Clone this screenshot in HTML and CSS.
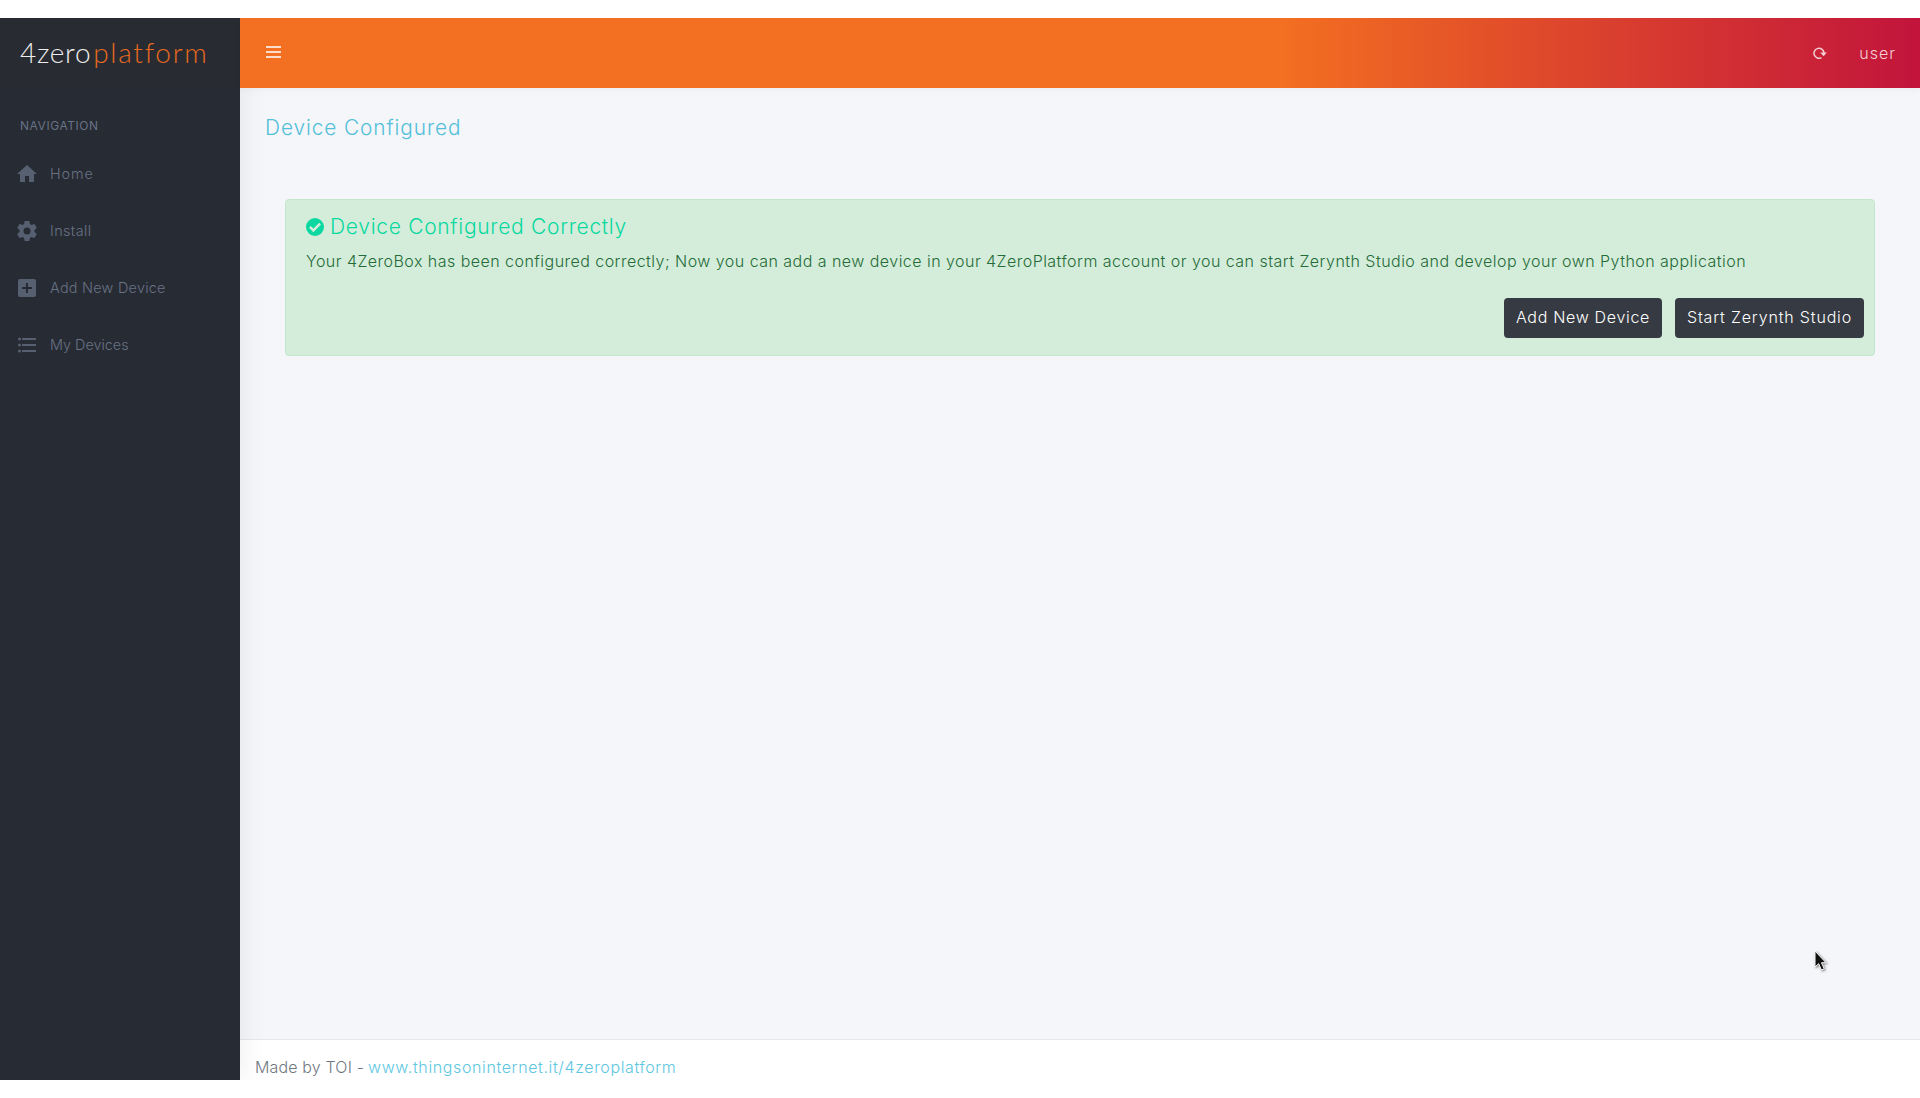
FILE: index.html
```
<!DOCTYPE html>
<html lang="en">
<head>
<meta charset="utf-8">
<title>4ZeroPlatform</title>
<link rel="stylesheet" href="styles.css">
</head>
<body>
<div class="app">
  <aside class="sidebar">
    <div class="brand"><span class="brand-zero">4zero</span><span class="brand-platform">platform</span></div>
    <h6 class="nav-title">NAVIGATION</h6>
    <nav class="nav">
      <a class="nav-item nav-home"><svg viewBox="0 0 24 24"><path d="M10 20v-6h4v6h5v-8h3L12 3 2 12h3v8z"/></svg><span>Home</span></a>
      <a class="nav-item nav-install"><svg viewBox="0 0 24 24"><path d="M19.43 12.98c.04-.32.07-.64.07-.98s-.03-.66-.07-.98l2.11-1.65c.19-.15.24-.42.12-.64l-2-3.46c-.12-.22-.39-.3-.61-.22l-2.49 1c-.52-.4-1.08-.73-1.69-.98l-.38-2.65A.49.49 0 0 0 14 2h-4c-.25 0-.46.18-.49.42l-.38 2.65c-.61.25-1.17.59-1.69.98l-2.49-1c-.23-.09-.49 0-.61.22l-2 3.46c-.13.22-.07.49.12.64l2.11 1.65c-.04.32-.07.65-.07.98s.03.66.07.98l-2.11 1.65c-.19.15-.24.42-.12.64l2 3.46c.12.22.39.3.61.22l2.49-1c.52.4 1.08.73 1.69.98l.38 2.65c.03.24.24.42.49.42h4c.25 0 .46-.18.49-.42l.38-2.65c.61-.25 1.17-.59 1.69-.98l2.49 1c.23.09.49 0 .61-.22l2-3.46c.12-.22.07-.49-.12-.64zM12 15.5a3.5 3.5 0 1 1 0-7 3.5 3.5 0 0 1 0 7z"/></svg><span>Install</span></a>
      <a class="nav-item nav-add"><svg viewBox="0 0 24 24"><path d="M19 3H5a2 2 0 0 0-2 2v14c0 1.100.9 2 2 2h14a2 2 0 0 0 2-2V5a2 2 0 0 0-2-2zm-2 10h-4v4h-2v-4H7v-2h4V7h2v4h4z"/></svg><span>Add New Device</span></a>
      <a class="nav-item"><svg viewBox="0 0 24 24"><path d="M7 5h14v2H7zM7 11h14v2H7zM7 17h14v2H7z"/><circle cx="4.500" cy="6" r="1.500"/><circle cx="4.500" cy="12" r="1.500"/><circle cx="4.500" cy="18" r="1.500"/></svg><span>My Devices</span></a>
    </nav>
  </aside>
  <div class="main">
    <header class="topbar">
      <svg class="menu" viewBox="0 0 15 12"><path d="M0 0h15v2H0zM0 5h15v2H0zM0 10h15v2H0z"/></svg>
      <div class="topbar-right">
        <svg class="refresh" viewBox="0 0 14 12"><path class="arc" d="M8.500 10.600A5 5 0 1 1 11 6"/><path class="tip" d="M7.200 5.600h6.600L10.600 9.200z"/></svg>
        <span class="user">user</span>
      </div>
    </header>
    <main class="content">
      <h1 class="page-title">Device Configured</h1>
      <section class="alert">
        <h2 class="alert-title"><svg viewBox="0 0 18 18"><circle cx="9" cy="9" r="9"/><path d="M3.900 8.900l3.500 3.500 6.700-6.700"/></svg><span>Device Configured Correctly</span></h2>
        <p class="alert-text">Your 4ZeroBox has been configured correctly; Now you can add a new device in your 4ZeroPlatform account or you can start Zerynth Studio and develop your own Python application</p>
        <div class="actions"><button class="btn btn-add">Add New Device</button><button class="btn btn-start">Start Zerynth Studio</button></div>
      </section>
    </main>
    <footer class="footer"><span>Made by TOI -</span><a>www.thingsoninternet.it/4zeroplatform</a></footer>
  </div>
</div>
<svg class="cursor" viewBox="0 0 14 22"><path d="M1 1v16l3.700-3.300 2.700 6.300 2.800-1.200-2.700-6.100H12z"/></svg>
</body>
</html>
```
FILE: styles.css
```
* { box-sizing: border-box; }
body { margin: 0; background: #fff; font-family: Inter, sans-serif; font-weight: 300; font-size: 16px; }
h1, h2, h6, p { margin: 0; font-weight: inherit; }
.app { display: flex; height: 1062px; margin-top: 18px; overflow: hidden; }
.sidebar { width: 240px; flex: none; background: #272b33; box-shadow: 0 0 28px rgba(0,0,0,.08); z-index: 1; color: #687285; }
.brand { display: flex; gap: 2px; height: 70px; padding: 16px 0 0 20px; background: #282c32; font-family: Lato, sans-serif; font-size: 28px; line-height: 36px; white-space: nowrap; color: #eee; }
.brand-zero { letter-spacing: .7px; }
.brand-platform { color: #e9691f; letter-spacing: 1.700px; }
.nav-title { padding: 29px 0 0 20px; font-size: 12px; font-weight: 400; line-height: 18px; letter-spacing: .55px; }
.nav { display: flex; flex-direction: column; padding-top: 10px; }
.nav-item { display: flex; align-items: center; height: 57px; gap: 11px; padding-left: 15px; font-size: 14.400px; }
.nav-home { letter-spacing: .9px; }
.nav-install { letter-spacing: .4px; }
.nav-add { letter-spacing: .27px; }
.nav-item svg { width: 24px; height: 24px; fill: #576071; }
.main { flex: 1; display: flex; flex-direction: column; background: #f4f6fa; }
.topbar { position: relative; z-index: 2; height: 70px; display: flex; align-items: center; justify-content: space-between; padding: 0 24px 0 26px; background: linear-gradient(90deg, #f36f21 62%, #e24f29 75%, #c2143c); box-shadow: 0 1px 8px rgba(0,0,0,.05); }
.menu { width: 15px; height: 12px; margin-bottom: 2px; fill: #fcdcca; }
.topbar-right { display: flex; align-items: center; gap: 32px; color: #f3cfd6; }
.user { letter-spacing: 1px; }
.refresh { width: 14px; height: 12px; }
.arc { fill: none; stroke: #f3cfd6; stroke-width: 1.500; }
.tip { fill: #f3cfd6; }
.sidebar { position: relative; }
.content { flex: 1; padding: 24px 45px; }
.page-title { font-size: 20.800px; line-height: 32px; color: #53bfd9; margin-left: -20px; letter-spacing: .92px; }
.alert { height: 157px; margin-top: 55px; padding: 12px 10px 0 20px; background: #d4edda; border: 1px solid #c3e6cb; border-radius: 4px; }
.alert-title { display: flex; align-items: center; gap: 6px; font-size: 21px; line-height: 30px; color: #0ad8a0; letter-spacing: .7px; }
.alert-title svg { width: 18px; height: 18px; fill: #0ad8a0; }
.alert-title path { fill: none; stroke: #d4edda; stroke-width: 2.500; }
.alert-text { margin-top: 7px; line-height: 24px; color: #246b37; white-space: nowrap; letter-spacing: .465px; }
.actions { display: flex; justify-content: flex-end; gap: 13px; margin-top: 25px; }
.btn { height: 40px; border: 0; border-radius: 4px; background: #363a42; color: #fff; font: inherit; padding: 0 12px 2px; }
.btn-add { letter-spacing: .68px; }
.btn-start { letter-spacing: .83px; }
.footer { height: 41px; display: flex; gap: 4px; padding: 15px 15px 0; background: #fff; border-top: 1px solid #e7eaed; color: #6f777f; line-height: 24px; letter-spacing: .15px; }
.footer a { color: #5dc7df; letter-spacing: .62px; }
.cursor { position: absolute; left: 1814px; top: 950px; width: 14px; height: 22px; fill: #111; stroke: #fff; filter: drop-shadow(1px 1px 1px rgba(0,0,0,.5)); }
```
